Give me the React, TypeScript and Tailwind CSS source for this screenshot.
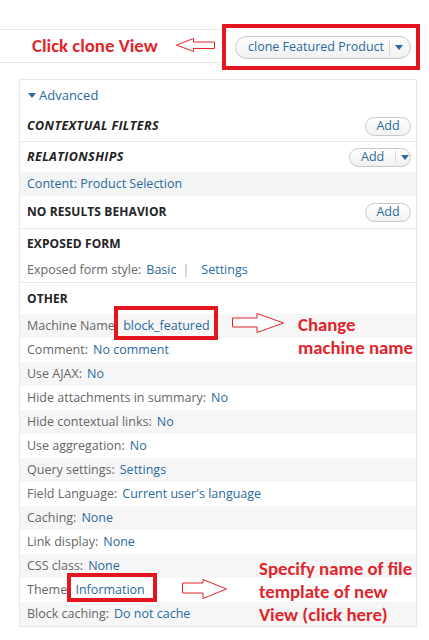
import React from "react";

const LINK = "text-[#2a6a9e]";

function Caret({ className = "" }: { className?: string }) {
  return (
    <svg width="8" height="5" viewBox="0 0 8 5" className={className}>
      <path d="M0 0 L8 0 L4 5 Z" fill="#2a6a9e" />
    </svg>
  );
}

function AddBtn({ dropdown = false }: { dropdown?: boolean }) {
  return (
    <div
      className={`flex items-center h-[19px] rounded-full border border-[#c8c8c8] bg-gradient-to-b from-white to-[#f1f1f1] text-[12.5px] ${LINK} ${
        dropdown ? "w-[62px] pl-[11px]" : "w-[46px] justify-center"
      }`}
    >
      <span>Add</span>
      {dropdown && (
        <>
          <span className="ml-[11px] h-[12px] w-px bg-[#d8d8d8]" />
          <Caret className="ml-[5px]" />
        </>
      )}
    </div>
  );
}

function Header({
  title,
  italic = false,
  btn,
  h = "h-[30px]",
}: {
  title: string;
  italic?: boolean;
  btn?: "add" | "drop";
  h?: string;
}) {
  return (
    <div className={`${h} flex items-center justify-between pl-[7px] pr-[5px]`}>
      <span
        className={`font-bold text-[#222] uppercase ${
          italic ? "italic text-[12.5px] tracking-[0.4px]" : "text-[12px] tracking-[0.1px]"
        }`}
      >
        {title}
      </span>
      {btn === "add" && <AddBtn />}
      {btn === "drop" && <AddBtn dropdown />}
    </div>
  );
}

function Row({
  label,
  value,
  gray,
}: {
  label: string;
  value: string;
  gray: boolean;
}) {
  return (
    <div
      className={`h-[24px] flex items-center pl-[7px] text-[12.5px] ${
        gray ? "bg-[#f6f6f6]" : "bg-white"
      }`}
    >
      <span className="text-[#666]">{label}</span>
      <span className={`ml-[5px] ${LINK}`}>{value}</span>
    </div>
  );
}

function ArrowLeft() {
  return (
    <svg width="40" height="16" viewBox="0 0 40 16" className="ml-[18px]">
      <path
        d="M0.5 7 L17.5 0.5 L17.5 4 L38.5 4 L38.5 10.5 L17.5 10.5 L17.5 13.5 Z"
        fill="white"
        stroke="#e0252b"
        strokeWidth="1"
      />
    </svg>
  );
}

function ArrowRight({ w, h, bodyW, bodyTop, bodyBot }: { w: number; h: number; bodyW: number; bodyTop: number; bodyBot: number }) {
  const mid = h / 2;
  return (
    <svg width={w} height={h} viewBox={`0 0 ${w} ${h}`}>
      <path
        d={`M0.5 ${bodyTop} L${bodyW} ${bodyTop} L${bodyW} 0.5 L${w - 0.5} ${mid} L${bodyW} ${h - 0.5} L${bodyW} ${bodyBot} L0.5 ${bodyBot} Z`}
        fill="white"
        stroke="#e0252b"
        strokeWidth="1"
      />
    </svg>
  );
}

export default function App() {
  const font = { fontFamily: '"Open Sans", "Noto Sans", sans-serif' };
  const anno = "font-['Carlito','Lato','Liberation_Sans',sans-serif] font-bold text-[#e0252b]";
  const rows: [string, string][] = [
    ["Machine Name:", "block_featured"],
    ["Comment:", "No comment"],
    ["Use AJAX:", "No"],
    ["Hide attachments in summary:", "No"],
    ["Hide contextual links:", "No"],
    ["Use aggregation:", "No"],
    ["Query settings:", "Settings"],
    ["Field Language:", "Current user's language"],
    ["Caching:", "None"],
    ["Link display:", "None"],
    ["CSS class:", "None"],
    ["Theme:", "Information"],
    ["Block caching:", "Do not cache"],
  ];
  return (
    <div className="relative w-[429px] h-[640px] bg-white overflow-hidden" style={font}>
      {/* top bar */}
      <div className="flex items-start pt-[24px]">
        <div className="mt-[5px] h-[34px] w-[222px] border-y border-[#e9e9e9] flex items-center pl-[32px]">
          <span className={`${anno} text-[18.8px] leading-none`}>Click clone View</span>
          <ArrowLeft />
        </div>
        <div className="w-[198px] h-[46px] border-[4px] border-[#e3161f] flex items-center pl-[9px]">
          <div className="flex items-center h-[23px] w-[176px] rounded-full border border-[#c8c8c8] bg-gradient-to-b from-white to-[#f0f0f0] pl-[12px]">
            <span className={`text-[12.5px] ${LINK}`}>clone Featured Product</span>
            <span className="ml-auto h-[15px] w-px bg-[#d8d8d8]" />
            <Caret className="ml-[5px] mr-[7px]" />
          </div>
        </div>
      </div>

      {/* panel */}
      <div className="ml-[19px] mt-[9px] w-[398px] border border-[#e6e6e6]">
        <div className="h-[31px] flex items-center pl-[8px]">
          <Caret />
          <span className={`ml-[3px] text-[13px] ${LINK}`}>Advanced</span>
        </div>
        <div className="border-b border-[#e8e8e8]">
          <Header title="Contextual filters" italic btn="add" />
        </div>
        <Header title="Relationships" italic btn="drop" />
        <div className="h-[24px] flex items-center pl-[7px] bg-[#f3f4f4] text-[12.5px]">
          <span className={LINK}>Content: Product Selection</span>
        </div>
        <div className="border-b border-[#e8e8e8]">
          <Header title="No results behavior" btn="add" h="h-[32px]" />
        </div>
        <Header title="Exposed form" />
        <div className="h-[24px] flex items-center pl-[7px] text-[12.5px] border-b border-[#e8e8e8]">
          <span className="text-[#666]">Exposed form style:</span>
          <span className={`ml-[5px] ${LINK}`}>Basic</span>
          <span className="ml-[6px] text-[#aaa]">|</span>
          <span className={`ml-[12px] ${LINK}`}>Settings</span>
        </div>
        <Header title="Other" h="h-[31px]" />
        {rows.map(([l, v], i) => (
          <Row key={l} label={l} value={v} gray={i % 2 === 0} />
        ))}
      </div>

      {/* annotations overlay */}
      <div className="absolute left-[114px] top-[306px] w-[104px] h-[34px] border-[4px] border-[#e3161f]" />
      <div className="absolute left-[232px] top-[313px]">
        <ArrowRight w={52} h={20} bodyW={25} bodyTop={5} bodyBot={14} />
      </div>
      <div className={`absolute left-[298px] top-[313px] ${anno} text-[18.8px] leading-[23px]`}>
        <div>Change</div>
        <div>machine name</div>
      </div>

      <div className="absolute left-[67px] top-[573px] w-[90px] h-[29px] border-[4px] border-[#e3161f]" />
      <div className="absolute left-[182px] top-[579px]">
        <ArrowRight w={45} h={20} bodyW={21} bodyTop={4} bodyBot={14} />
      </div>
      <div className={`absolute left-[259px] top-[557px] ${anno} text-[18.8px] leading-[23px]`}>
        <div>Specify name of file</div>
        <div>template of new</div>
        <div>View (click here)</div>
      </div>
    </div>
  );
}
